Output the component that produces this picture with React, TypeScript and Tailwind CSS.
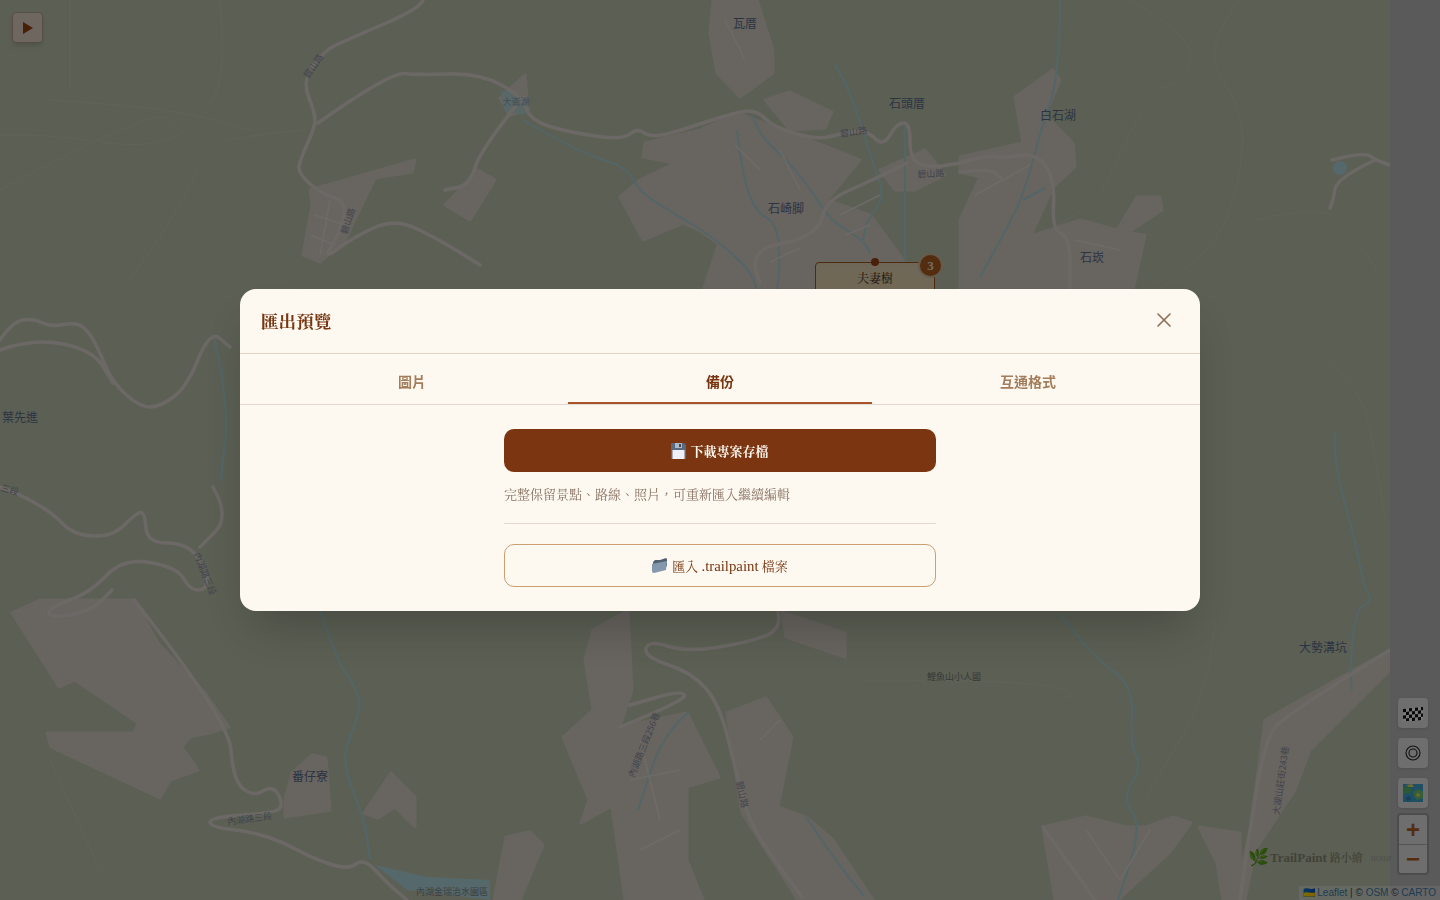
import React, { useState } from 'react';
import { X } from 'lucide-react';

const LAND: string[] = [
  '713,0 710,33 717,73 740,97 773,73 773,50 757,0',
  '737,113 817,143 860,160 827,200 870,215 905,262 880,300 700,300 720,240 683,223 643,240 620,197 640,180 675,163 643,157 645,143 700,130',
  '737,172 680,217 735,255 745,210',
  '765,100 790,92 832,112 825,128 790,130',
  '1015,97 1053,70 1060,80 1045,115 1073,143 1075,167 1053,187 1030,237 1040,290 960,290 960,220 980,177 960,172 960,157 1023,143',
  '1028,237 1080,220 1117,230 1137,197 1160,197 1162,210 1127,233 1145,235 1133,290 1037,290',
  '12,613 59,687 75,680 138,723 134,733 47,733 51,747 160,798 170,780 198,770 182,747 190,737 209,733 229,727 205,693 158,643 134,600 40,600',
  '285,800 292,773 312,755 326,758 330,810 285,817',
  '364,813 391,773 415,797 415,827 395,807 378,818',
  '494,900 506,837 530,832 543,845 520,900',
  '593,630 585,660 593,710 563,737 589,800 581,823 612,806 625,900 703,900 687,860 687,787 719,777 687,713 620,727 632,690 628,610',
  '727,713 766,698 792,737 778,807 806,817 833,840 873,900 798,900 742,813',
  '782,612 845,633 845,657 786,637',
  '1043,827 1086,817 1126,827 1146,827 1173,817 1191,823 1169,853 1118,900 1055,900',
  '1199,827 1240,833 1240,900 1223,900 1217,863',
  '1265,720 1300,700 1390,650 1390,670 1310,750 1295,790 1255,850 1245,900 1235,900 1250,830',
  '310,190 345,180 415,160 412,172 375,178 345,240 320,262 303,255 312,205',
  '445,205 478,170 495,180 470,220',
  '500,98 525,75 528,110 510,115',
  '880,170 925,150 945,175 915,190 895,190',
];

const ROADS: string[] = [
  '423,0 421,8 347,40 325,50 302,80 315,113 315,127 300,160 298,173 320,193 347,202 340,233 323,260 352,238 395,218 440,240 480,265',
  '318,123 390,72 420,75 480,73 523,97 530,120 567,132 623,140 637,128 650,137 673,133 733,113 757,110 773,127 817,140 843,133 867,130 883,147 897,123 910,123 910,160 930,168 960,163',
  '907,163 873,180 827,200 820,227 800,240 763,247 753,263 760,283',
  '0,340 12,322 33,318 50,327 77,322 90,333 100,353 113,383 140,407 160,407 187,387 210,330 230,347',
  '0,350 33,338 93,350 113,383',
  '0,487 17,493 53,513 73,535 113,537 137,512 145,513 147,543 187,543 207,570 207,590 190,590 177,567 123,558 90,593 50,607 48,618 90,612 112,590',
  '213,487 230,517 200,547',
  '134,600 229,720 233,780 253,797 273,785 283,803 277,813 210,817 210,827 253,832 285,843 312,858 348,870 364,858 387,883 407,900',
  '778,613 782,630 746,643 687,652 648,640 644,657 691,672 719,703 735,767 750,827 802,897',
  '620,727 687,700 682,690 630,705',
  '960,163 987,155 1003,158 1037,153 1055,180 1052,230 1070,237 1070,290',
  '960,172 990,168 1003,180',
  '1332,160 1365,152 1375,160 1390,165',
  '1375,160 1337,178 1333,200 1330,208',
  '1043,827 1095,900',
  '1390,650 1285,715 1265,740 1250,830 1240,900',
  '523,97 480,150 470,185 445,190',
];

const MINOR_ROADS: string[] = [
  '330,200 320,255',
  '315,215 345,225',
  '310,235 335,245',
  '640,740 660,820',
  '630,780 680,770',
  '640,850 680,830',
  '1086,830 1120,880',
  '1150,830 1120,880',
  '760,740 780,720',
  '735,145 760,170',
  '780,150 800,190',
  '975,195 1030,165',
  '840,215 880,195',
  '845,235 870,225',
  '770,262 800,248',
  '725,20 745,60',
  '1075,240 1120,250',
];

const RIVERS: string[] = [
  '523,120 580,153 627,167 640,193 680,217 713,237 750,270 757,290',
  '737,130 743,180 757,213 777,223 780,267 777,290',
  '753,115 757,133 790,163 813,193 830,220 863,240 870,253',
  '835,65 850,90 863,133 873,163 885,197 867,220 863,240',
  '905,123 905,262',
  '1060,0 1060,73 1040,133 1030,173 1017,210 980,277',
  '1023,200 1045,188',
  '213,333 230,407 220,480',
  '320,610 336,660 358,690 360,713 340,760 364,817 370,860',
  '1059,613 1094,657 1134,687 1130,743 1142,767 1122,797 1142,827 1118,900',
  '806,817 837,863 865,897',
  '689,712 663,733 638,810',
  '1335,433 1333,460 1355,540 1365,590 1373,600 1355,610 1350,670 1352,690',
];

const TRAILS: string[] = [
  '220,0 225,60 212,110 160,150 50,135 0,135',
  '45,100 160,106 250,130',
  '0,190 155,107 180,130',
  '305,130 250,135 210,145 175,215 130,280',
  '1130,0 1200,40 1180,85 1160,85 1130,130 1100,200 1050,230',
  '1240,0 1200,50 1245,110 1240,180 1220,240 1160,290',
  '1255,220 1320,205 1350,230 1380,275',
  '1320,350 1360,390 1373,440 1385,520',
  '860,680 1000,680 1080,690 1060,700',
  '1215,620 1210,690 1150,790 1145,800',
  '50,760 100,870',
  '70,0 70,90',
];

type MapLabel = [string, number, number, number, number, string];

const PLACE = '#586888';
const ROAD_TEXT = '#84889a';

const LABELS: MapLabel[] = [
  ['瓦厝', 745, 28, 12, 0, PLACE],
  ['石頭厝', 907, 108, 12, 0, PLACE],
  ['白石湖', 1058, 120, 12, 0, PLACE],
  ['石崎脚', 786, 213, 12, 0, PLACE],
  ['石崁', 1092, 262, 12, 0, PLACE],
  ['葉先進', 20, 422, 12, 0, PLACE],
  ['番仔寮', 310, 781, 12, 0, PLACE],
  ['大勢溝坑', 1323, 652, 12, 0, PLACE],
  ['大崙湖', 516, 105, 9, 0, '#80a0b8'],
  ['鯉魚山小人國', 954, 680, 9, 0, '#707070'],
  ['內湖金瑞治水園區', 452, 895, 9, 0, '#808080'],
  ['碧山路', 316, 68, 9, -55, ROAD_TEXT],
  ['碧山路', 351, 222, 9, -72, ROAD_TEXT],
  ['碧山路', 854, 135, 9, -8, ROAD_TEXT],
  ['碧山路', 931, 177, 9, -3, ROAD_TEXT],
  ['內湖路三段', 250, 822, 9, -7, ROAD_TEXT],
  ['內湖路三段', 202, 575, 9, 68, ROAD_TEXT],
  ['三段', 9, 493, 9, 15, ROAD_TEXT],
  ['內湖路三段256巷', 647, 746, 9, -68, ROAD_TEXT],
  ['碧山路', 739, 795, 9, 78, ROAD_TEXT],
  ['大湖山莊街243巷', 1284, 781, 9, -82, ROAD_TEXT],
];

// rounds the traced polylines so they read like map lines
const smooth = (line: string) => {
  const p = line.split(' ').map((s) => s.split(',').map(Number));
  if (p.length < 3) return `M${line}`;
  let d = `M${p[0][0]} ${p[0][1]}`;
  for (let i = 1; i < p.length - 1; i++) {
    const mx = (p[i][0] + p[i + 1][0]) / 2;
    const my = (p[i][1] + p[i + 1][1]) / 2;
    d += ` Q${p[i][0]} ${p[i][1]} ${mx} ${my}`;
  }
  const last = p[p.length - 1];
  return `${d} L${last[0]} ${last[1]}`;
};

const MapLayer = () => (
  <svg viewBox="0 0 1390 900" className="h-full w-full" xmlns="http://www.w3.org/2000/svg">
    <rect width="1390" height="900" fill="#b8c0a8" />
    {TRAILS.map((t, i) => (
      <path key={i} d={smooth(t)} fill="none" stroke="#c0c7b0" strokeWidth="1" />
    ))}
    {LAND.map((p, i) => (
      <polygon key={i} points={p} fill="#d0c9c0" stroke="#d0c9c0" strokeWidth="3" strokeLinejoin="round" />
    ))}
    <polygon points="375,865 427,877 490,880 490,900 407,890" fill="#aad0d6" />
    <polygon points="500,90 512,92 528,100 525,115 505,112" fill="#aad0d6" opacity="0.7" />
    <circle cx="1340" cy="168" r="7" fill="#aad0d6" />
    {RIVERS.map((r, i) => (
      <path key={i} d={smooth(r)} fill="none" stroke="#a6cbd0" strokeWidth="2" />
    ))}
    {MINOR_ROADS.map((r, i) => (
      <path key={i} d={smooth(r)} fill="none" stroke="#dcd4ce" strokeWidth="1.5" />
    ))}
    {ROADS.map((r, i) => (
      <path key={i} d={smooth(r)} fill="none" stroke="#d9d1cb" strokeWidth="3.5" strokeLinecap="round" />
    ))}
    {LABELS.map(([text, x, y, size, rot, color], i) => (
      <text
        key={i}
        x={x}
        y={y}
        fontSize={size}
        fill={color}
        textAnchor="middle"
        transform={rot ? `rotate(${rot} ${x} ${y})` : undefined}
        fontFamily="'Noto Sans CJK TC', sans-serif"
      >
        {text}
      </text>
    ))}
  </svg>
);

const ToolButton = ({ children }: { children: React.ReactNode }) => (
  <button className="flex h-[30px] w-[30px] items-center justify-center rounded bg-[#dcdcdc] shadow-sm">
    {children}
  </button>
);

const FlagIcon = () => (
  <svg width="20" height="16" viewBox="0 0 20 16">
    <g transform="skewY(-6) translate(0 3)">
      <rect x="0" y="1" width="20" height="13" fill="#f2f2f2" />
      {[0, 1, 2, 3, 4, 5, 6].map((c) =>
        [0, 1, 2, 3].map((r) =>
          (c + r) % 2 === 0 ? <rect key={`${c}-${r}`} x={c * 3} y={1 + r * 3.25} width="3" height="3.25" fill="#111111" /> : null,
        ),
      )}
    </g>
  </svg>
);

const TargetIcon = () => (
  <svg width="16" height="16" viewBox="0 0 16 16" fill="none" stroke="#222222" strokeWidth="1.1">
    <circle cx="8" cy="8" r="7" />
    <circle cx="8" cy="8" r="4" />
  </svg>
);

const MapIcon = () => (
  <svg width="20" height="18" viewBox="0 0 20 18">
    <rect width="20" height="18" fill="#3f9fc8" />
    <path d="M0 4 L6 2 L9 6 L6 10 L2 9 L0 11 Z" fill="#57b06a" />
    <path d="M10 8 L16 5 L20 8 L20 14 L14 16 L11 12 Z" fill="#6abf70" />
    <path d="M3 1 L9 0 L11 3 L6 3 Z M13 10 L16 9 L17 12 L14 13 Z" fill="#e4d25a" />
    <path d="M3 13 L7 12 L8 16 L4 17 Z" fill="#2f7fb0" />
  </svg>
);

const FloppyIcon = () => (
  <svg width="15" height="16" viewBox="0 0 15 16" className="-mt-[3px] shrink-0">
    <path d="M0 1 Q0 0 1 0 L13 0 L15 2 L15 15 Q15 16 14 16 L1 16 Q0 16 0 15 Z" fill="#5a6b80" />
    <rect x="4" y="0" width="7" height="5" fill="#aeb8c6" />
    <rect x="8" y="1" width="2" height="3" fill="#3d4a5c" />
    <rect x="1.5" y="7" width="12" height="9" fill="#f0f0f6" />
  </svg>
);

const FolderIcon = () => (
  <svg width="16" height="15" viewBox="0 0 16 15" className="-mt-[2px] shrink-0">
    <path d="M1 4 L3 2 L8 2 L14 0 L15 1 L15 8 L2 14 Z" fill="#4f6072" />
    <path d="M0 6 L15 3 L14 12 L2 15 Q0 15 0 13 Z" fill="#8398ad" />
  </svg>
);

export default function App() {
  const [tab, setTab] = useState('備份');
  const tabs = ['圖片', '備份', '互通格式'];

  return (
    <div className="relative flex h-screen w-screen overflow-hidden bg-[#b4b4b4] [font-family:'Noto_Sans_CJK_TC',sans-serif]">
      <div className="relative h-full w-[1390px] shrink-0">
        <MapLayer />

        <div className="absolute left-[815px] top-[262px] h-[60px] w-[120px] rounded border-[1.5px] border-[#a05418] bg-gradient-to-b from-[#dccdb0] to-[#eedca6] pt-[7px] text-center text-[12px] text-[#3f2a18] [font-family:'Liberation_Serif','Noto_Serif_CJK_TC',serif]">
          夫妻樹
        </div>
        <span className="absolute left-[871px] top-[258px] h-2 w-2 rounded-full bg-[#92400e]" />
        <span className="absolute left-[918px] top-[253px] flex h-[25px] w-[25px] items-center justify-center rounded-full border-2 border-[#cbb898] bg-[#a85a20] text-[13px] font-bold text-[#e8d8c8] [font-family:'Liberation_Serif','Noto_Serif_CJK_TC',serif]">
          3
        </span>
      </div>

      <button className="absolute left-3 top-3 flex h-[31px] w-[31px] items-center justify-center rounded border border-[#b09a88] bg-[#dacec0] shadow-md">
        <svg width="12" height="14" viewBox="0 0 12 14">
          <path d="M1 1 L11 7 L1 13 Z" fill="#92400e" />
        </svg>
      </button>

      <div className="absolute right-[12px] top-[698px] flex flex-col items-center gap-[10px]">
        <ToolButton>
          <FlagIcon />
        </ToolButton>
        <ToolButton>
          <TargetIcon />
        </ToolButton>
        <ToolButton>
          <MapIcon />
        </ToolButton>
      </div>

      <div className="absolute right-[11px] top-[813px] flex w-[32px] flex-col overflow-hidden rounded border-2 border-black/30 bg-[#dcdcdc] font-bold text-[#a85a20] [font-family:'Liberation_Sans',sans-serif]">
        <span className="flex h-[30px] items-center justify-center border-b border-[#aaaaaa] text-[24px] leading-none">+</span>
        <span className="flex h-[28px] items-center justify-center text-[24px] leading-none">−</span>
      </div>

      <div className="absolute left-[1248px] top-[848px] flex items-center gap-[5px] [font-family:'Liberation_Serif','Noto_Serif_CJK_TC',serif]">
        <span className="-mr-1 text-[17px] leading-none">🌿</span>
        <span className="text-[13px] font-bold text-[#84846f]">TrailPaint</span>
        <span className="-ml-[2px] text-[11px] font-semibold text-[#84846f]">路小繪</span>
        <span className="ml-[3px] w-[25px] overflow-hidden text-[10px] text-[#a0a098]">notur</span>
      </div>

      <div className="absolute bottom-0 right-0 bg-white/30 px-1 text-[10px] leading-[14px] text-[#444444] [font-family:'Liberation_Sans',sans-serif]">
        <span className="text-[#3c78a8]">🇺🇦 Leaflet</span> | © <span className="text-[#3c78a8]">OSM</span> © <span className="text-[#3c78a8]">CARTO</span>
      </div>

      <div className="fixed inset-0 z-50 flex items-center justify-center bg-black/50">
        <div className="w-[960px] overflow-hidden rounded-2xl bg-[#fdf8f0] shadow-2xl [font-family:'Liberation_Serif','Noto_Serif_CJK_TC',serif]">
          <div className="flex h-[65px] items-center justify-between border-b border-[#e8d5c0] pl-[21px] pr-[24px] pt-[2px]">
            <h2 className="text-[17.6px] font-bold text-[#78350f]">匯出預覽</h2>
            <button className="-mt-[5px] text-[#8f6f55]">
              <X size={24} strokeWidth={1.6} />
            </button>
          </div>

          <div className="flex h-[51px] gap-1 border-b border-[#e5d8cc] px-5">
            {tabs.map((t) => (
              <button
                key={t}
                onClick={() => setTab(t)}
                className={
                  t === tab
                    ? "flex-1 border-b-2 border-[#a9552c] pt-[6px] text-[14px] font-semibold text-[#78350f] [font-family:'Noto_Sans_CJK_TC',sans-serif]"
                    : "flex-1 border-b-2 border-transparent pt-[6px] text-[14px] font-semibold text-[#a47e5c] [font-family:'Noto_Sans_CJK_TC',sans-serif]"
                }
              >
                {t}
              </button>
            ))}
          </div>

          <div className="mx-auto flex w-[432px] flex-col pb-6 pt-6">
            <button className="flex h-[43px] items-center justify-center gap-1 rounded-[10px] bg-[#7c3511] pt-[3px] text-[13px] font-bold text-[#fdf8f0]">
              <FloppyIcon />
              下載專案存檔
            </button>
            <p className="mt-[14px] text-[13px] leading-[18px] text-[#8a7464]">
              完整保留景點、路線、照片，可重新匯入繼續編輯
            </p>
            <div className="mt-[19px] border-t border-[#e5d8cc]" />
            <button className="mt-5 flex h-[43px] items-center justify-center gap-1 rounded-[10px] border border-[#c9a06e] pt-[2px] text-[13px] text-[#78350f]">
              <FolderIcon />
              <span>
                匯入 <span className="text-[14.8px]">.trailpaint</span> 檔案
              </span>
            </button>
          </div>
        </div>
      </div>
    </div>
  );
}
